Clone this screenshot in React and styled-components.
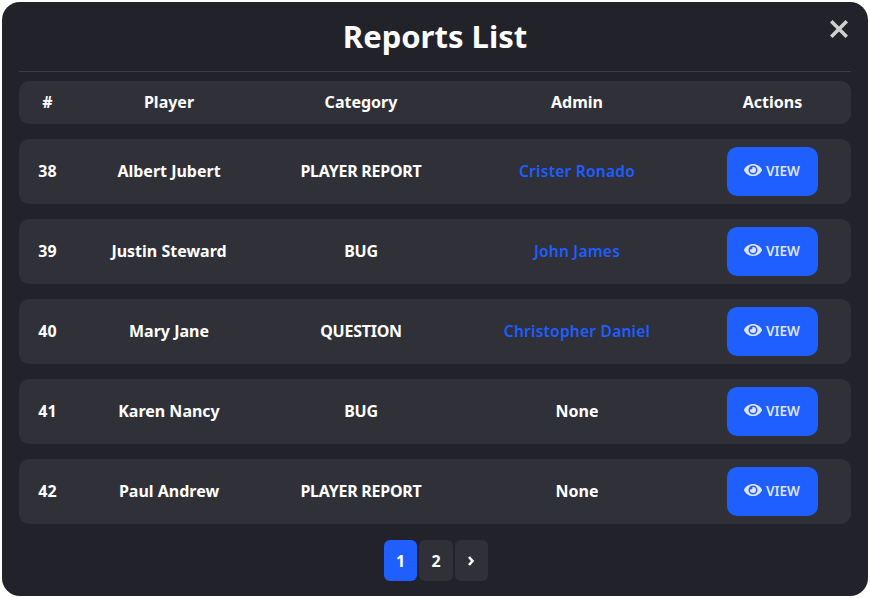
import React from "react";
import styled, { createGlobalStyle } from "styled-components";
import { FaEye } from "react-icons/fa";

const Global = createGlobalStyle`
  html, body { margin: 0; padding: 0; background: #fff; }
  body { font-family: "Noto Sans", "DejaVu Sans", sans-serif; }
`;
const Page = styled.div`
  width: 870px; height: 598px; padding: 2px; box-sizing: border-box;
`;
const Modal = styled.div`
  position: relative;
  width: 866px; height: 594px; box-sizing: border-box;
  background: #21222a; border-radius: 18px;
  padding: 0 17px;
  color: #fff;
  display: flex; flex-direction: column;
`;
const Title = styled.h1`
  margin: 0; height: 70px; box-sizing: border-box;
  border-bottom: 1px solid #3b3c46;
  display: flex; align-items: center; justify-content: center;
  font-size: 31px; font-weight: 700; line-height: 1;
`;
const Close = styled.button`
  position: absolute; top: 18px; right: 20px;
  width: 18px; height: 18px; padding: 0;
  background: none; border: 0; color: #cfcfd2;
  display: block;
  svg { display: block; }
`;
const Row = styled.div`
  display: grid;
  grid-template-columns: 57px 186px 198px 234px 157px;
  align-items: center;
  background: #2f3038;
  border-radius: 10px;
  height: ${p => (p.$head ? 43 : 65)}px;
  margin-top: ${p => (p.$head ? 9 : 15)}px;
  font-size: 16px; font-weight: 700; line-height: 20px;
`;
const Cell = styled.div`
  text-align: center; white-space: nowrap;
  margin-top: -2px;
  color: #fff;
  font-weight: 700;
`;
const CategoryCell = styled(Cell)`
  letter-spacing: -0.25px;
`;
const AdminCell = styled(Cell)`
  ${p => p.$link
    ? "font-size: 15.5px; letter-spacing: 0.25px; font-weight: 600; color: #1f5eff;"
    : ""}
`;
const ActionCell = styled.div`
  display: flex; justify-content: center;
`;
const ViewButton = styled.button`
  width: 91px; height: 49px; padding: 0 0 2px;
  background: #1f5eff; border: 0; border-radius: 10px;
  color: #dfe3ee;
  display: flex; align-items: center; justify-content: center; gap: 4px;
  font-family: "Noto Sans", sans-serif; font-size: 13.5px; font-weight: 600;
  svg { font-size: 18px; margin: 0 0 1px -1px; }
`;
const Pager = styled.div`
  display: flex; justify-content: center; gap: 2px; margin: 16px 0 0 2px;
`;
const PageButton = styled.button`
  width: 33.33px; height: 41px; padding: 0; border: 0; border-radius: 6px;
  background: ${p => (p.$active ? "#1f5eff" : "#2f3038")};
  color: #fff; font-family: inherit; font-size: 16px; font-weight: 700;
  display: flex; align-items: center; justify-content: center;
`;

const rows = [
  ["38", "Albert Jubert", "PLAYER REPORT", "Crister Ronado"],
  ["39", "Justin Steward", "BUG", "John James"],
  ["40", "Mary Jane", "QUESTION", "Christopher Daniel"],
  ["41", "Karen Nancy", "BUG", "None"],
  ["42", "Paul Andrew", "PLAYER REPORT", "None"],
];

export default function App() {
  return (
    <Page>
      <Global />
      <Modal>
        <Title>Reports List</Title>
        <Close aria-label="Close">
          <svg width="18" height="18" viewBox="0 0 18 18">
            <path d="M2.5 2.5 15.5 15.5M15.5 2.5 2.5 15.5" fill="none" stroke="currentColor" strokeWidth="3.6" strokeLinecap="square" />
          </svg>
        </Close>
        <Row $head>
          <Cell>#</Cell><Cell>Player</Cell><Cell>Category</Cell><Cell>Admin</Cell><Cell>Actions</Cell>
        </Row>
        {rows.map(([id, player, cat, admin]) => (
          <Row key={id}>
            <Cell>{id}</Cell>
            <Cell>{player}</Cell>
            <CategoryCell>{cat}</CategoryCell>
            <AdminCell $link={admin !== "None"}>{admin}</AdminCell>
            <ActionCell><ViewButton><FaEye />VIEW</ViewButton></ActionCell>
          </Row>
        ))}
        <Pager>
          <PageButton $active>1</PageButton>
          <PageButton>2</PageButton>
          <PageButton aria-label="Next">
            <svg width="8" height="10" viewBox="0 0 8 10">
              <path d="M2 1 5.5 5 2 9" fill="none" stroke="currentColor" strokeWidth="2.6" />
            </svg>
          </PageButton>
        </Pager>
      </Modal>
    </Page>
  );
}
